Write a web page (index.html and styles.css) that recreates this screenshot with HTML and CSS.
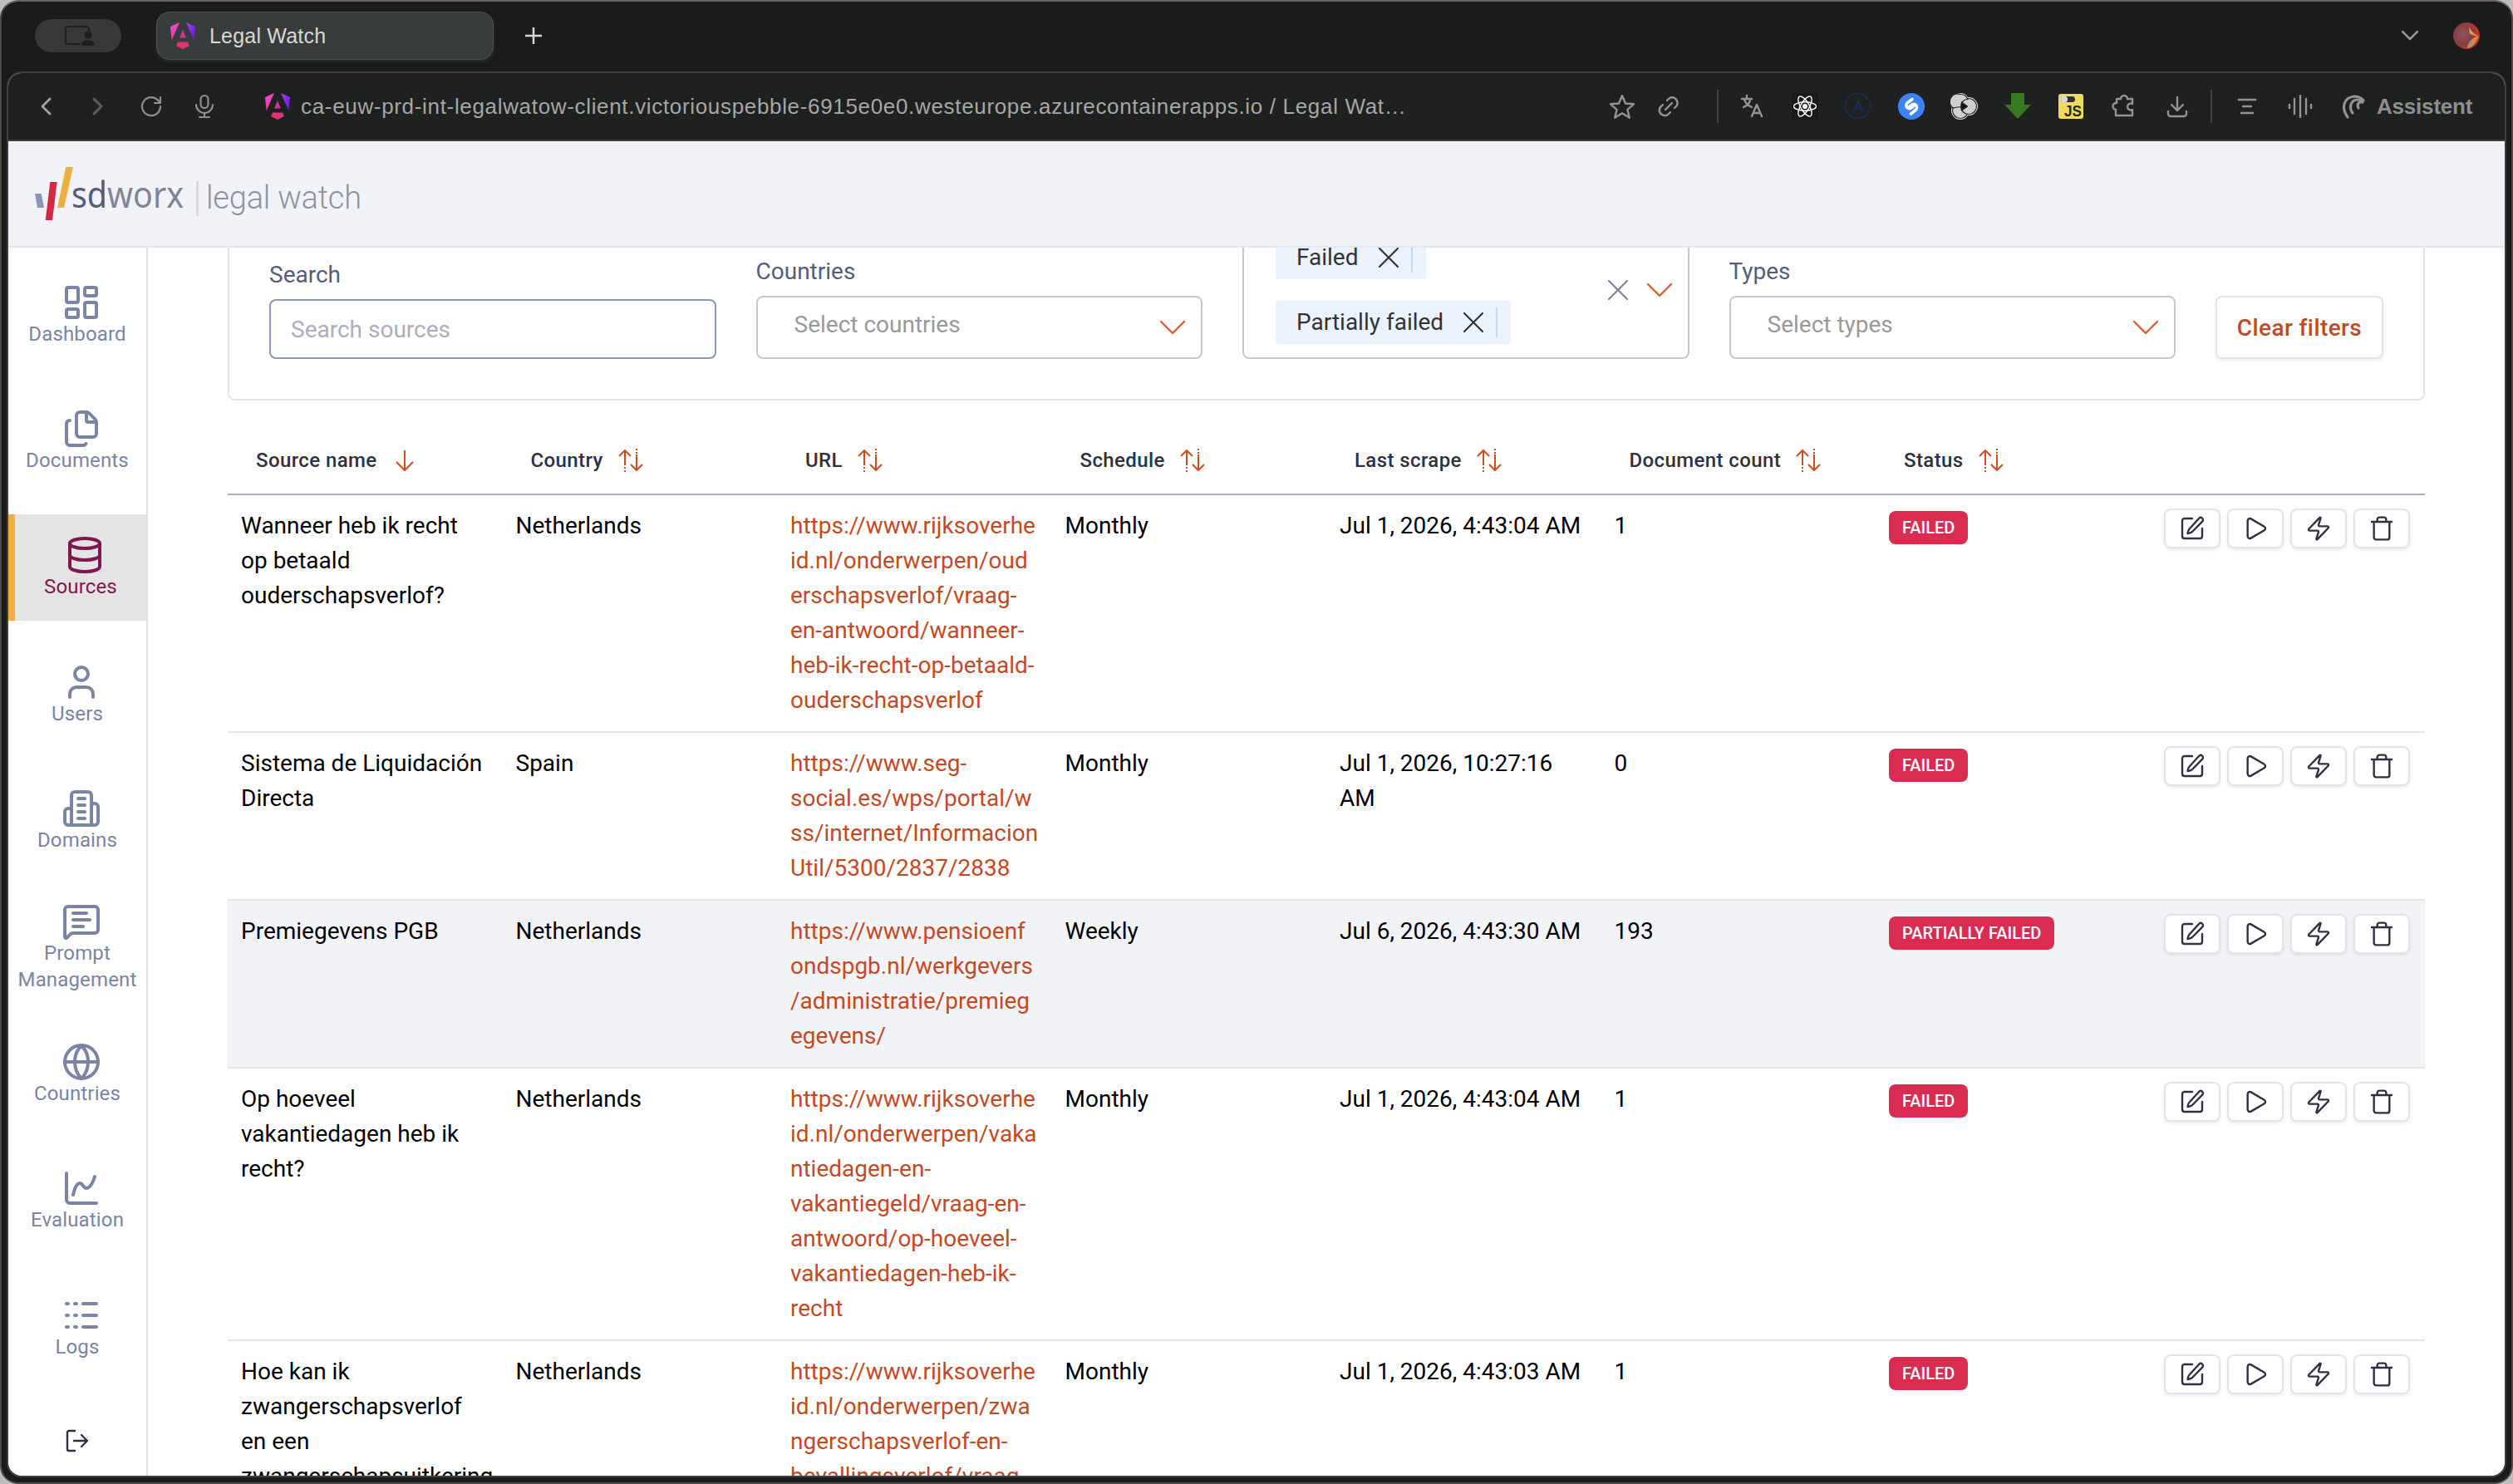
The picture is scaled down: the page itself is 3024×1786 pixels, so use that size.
FILE: index.html
```html
<!DOCTYPE html>
<html lang="en">
<head>
    <meta charset="UTF-8">
    <meta name="viewport" content="width=device-width, initial-scale=1.0">
    <title>Legal Watch</title>
    <link rel="stylesheet" href="styles.css">
</head>
<body>
    <!-- Icon definitions -->
    <svg class="sprite" width="0" height="0">
        <defs>
            <linearGradient id="ng-left" x1="0" y1="0" x2="0.4" y2="1">
                <stop offset="0" stop-color="#f04be0"/>
                <stop offset="1" stop-color="#e83a8c"/>
            </linearGradient>
            <linearGradient id="ng-right" x1="0" y1="0" x2="1" y2="1">
                <stop offset="0" stop-color="#b23df5"/>
                <stop offset="1" stop-color="#5a12e0"/>
            </linearGradient>
            <linearGradient id="ng-mid" x1="0" y1="1" x2="1" y2="0">
                <stop offset="0" stop-color="#ee3650"/>
                <stop offset="1" stop-color="#c330b4"/>
            </linearGradient>
            <radialGradient id="avatar-fill" cx="0.35" cy="0.45" r="0.7">
                <stop offset="0" stop-color="#8d5560"/>
                <stop offset="0.55" stop-color="#8a3b40"/>
                <stop offset="0.85" stop-color="#c8352a"/>
                <stop offset="1" stop-color="#8e2620"/>
            </radialGradient>
        </defs>
        <symbol id="angular" viewBox="0 0 30 32">
            <path fill="url(#ng-left)" d="M11 0 0 5l1.6 16.5z"/>
            <path fill="url(#ng-right)" d="M19 0l11 5-1.600 16.500z"/>
            <path fill="url(#ng-mid)" fill-rule="evenodd" d="M15 9l4 9.500h-8zM9 23.500h12l2 4.500-8 4-8-4z"/>
        </symbol>
        <symbol id="dashboard" viewBox="0 0 24 24"><rect width="7" height="9" x="3" y="3" rx="1"/><rect width="7" height="5" x="14" y="3" rx="1"/><rect width="7" height="9" x="14" y="12" rx="1"/><rect width="7" height="5" x="3" y="16" rx="1"/></symbol>
        <symbol id="files" viewBox="0 0 24 24"><path d="M15 2h-4a2 2 0 0 0-2 2v11a2 2 0 0 0 2 2h8a2 2 0 0 0 2-2V8"/><path d="M16.706 2.706A2.400 2.400 0 0 0 15 2v5a1 1 0 0 0 1 1h5a2.400 2.400 0 0 0-.706-1.706z"/><path d="M5 7a2 2 0 0 0-2 2v11a2 2 0 0 0 2 2h8a2 2 0 0 0 1.732-1"/></symbol>
        <symbol id="database" viewBox="0 0 24 24"><ellipse cx="12" cy="5" rx="9" ry="3"/><path d="M3 5v14a9 3 0 0 0 18 0V5M3 12a9 3 0 0 0 18 0"/></symbol>
        <symbol id="user" viewBox="0 0 24 24"><path d="M19 21v-2a4 4 0 0 0-4-4H9a4 4 0 0 0-4 4v2"/><circle cx="12" cy="7" r="4"/></symbol>
        <symbol id="building" viewBox="0 0 24 24"><path d="M6 22V4a2 2 0 0 1 2-2h8a2 2 0 0 1 2 2v18z"/><path d="M6 12H4a2 2 0 0 0-2 2v6a2 2 0 0 0 2 2h2M18 9h2a2 2 0 0 1 2 2v9a2 2 0 0 1-2 2h-2M10 6h4M10 10h4M10 14h4M10 18h4"/></symbol>
        <symbol id="message" viewBox="0 0 24 24"><path d="M22 17a2 2 0 0 1-2 2H6.828a2 2 0 0 0-1.414.586l-2.202 2.202A.71.71 0 0 1 2 21.286V5a2 2 0 0 1 2-2h16a2 2 0 0 1 2 2z"/><path d="M7 7h8M7 11h10M7 15h6"/></symbol>
        <symbol id="globe" viewBox="0 0 24 24"><circle cx="12" cy="12" r="10"/><path d="M12 2a14.500 14.500 0 0 0 0 20 14.500 14.500 0 0 0 0-20M2 12h20"/></symbol>
        <symbol id="chart" viewBox="0 0 24 24"><path d="M3 3v16a2 2 0 0 0 2 2h16"/><path d="M7 16c.5-2 1.500-7 4-7 2 0 2 3 4 3 2.500 0 4.500-5 5-7"/></symbol>
        <symbol id="logs" viewBox="0 0 24 24"><path d="M3 5h1M3 12h1M3 19h1M8 5h1M8 12h1M8 19h1M13 5h8M13 12h8M13 19h8"/></symbol>
        <symbol id="edit" viewBox="0 0 24 24"><path d="M12 3H5a2 2 0 0 0-2 2v14a2 2 0 0 0 2 2h14a2 2 0 0 0 2-2v-7"/><path d="M18.200 2.800a2 2 0 0 1 2.900 2.900l-8.700 8.900a6 6 0 0 1-2.600 1.500l-1.900.4.400-1.900a6 6 0 0 1 1.500-2.600z"/></symbol>
        <symbol id="play" viewBox="0 0 24 24"><path d="M5 5a2 2 0 0 1 3.008-1.728l11.997 6.998a2 2 0 0 1 .003 3.458l-12 7A2 2 0 0 1 5 19z"/></symbol>
        <symbol id="zap" viewBox="0 0 24 24"><path d="M4 14a1 1 0 0 1-.78-1.630l9.900-10.200a.5.5 0 0 1 .86.460l-1.920 6.020A1 1 0 0 0 13 10h7a1 1 0 0 1 .78 1.630l-9.900 10.200a.5.5 0 0 1-.86-.460l1.920-6.020A1 1 0 0 0 11 14z"/></symbol>
        <symbol id="trash" viewBox="0 0 24 24"><path d="M3 6h18M19 6v14a2 2 0 0 1-2 2H7a2 2 0 0 1-2-2V6M8 6V4a2 2 0 0 1 2-2h4a2 2 0 0 1 2 2v2"/></symbol>
        <symbol id="sort" viewBox="0 0 32 32"><path d="M9 22V4M2 11l7-7 7 7M23 9v18M16 21l7 7 7-7"/><path d="M9 24v6M23 2v6" stroke-dasharray="2 2"/></symbol>
        <symbol id="sort-down" viewBox="0 0 32 32"><path d="M16 4v24M6 18l10 10 10-10"/></symbol>
        <symbol id="chevron" viewBox="0 0 32 32"><path d="M2 9l14 14L30 9"/></symbol>
        <symbol id="close" viewBox="0 0 24 24"><path d="M1 1l22 22M23 1L1 23"/></symbol>
    </svg>

    <div class="window">
        <div class="tab-strip">
            <div class="profile-pill">
                <svg width="38" height="26" viewBox="0 0 38 26">
                    <path d="M19 23H5a3 3 0 0 1-3-3V5a3 3 0 0 1 3-3h22a3 3 0 0 1 3 3v2" fill="none" stroke="#1e2020" stroke-width="2"/>
                    <circle cx="29" cy="12" r="4.500" fill="#1e2020"/>
                    <path d="M21 25c0-4 3-7 8-7s8 3 8 7z" fill="#1e2020"/>
                </svg>
            </div>
            <div class="tab">
                <svg class="favicon"><use href="#angular"/></svg>
                <span class="tab-title">Legal Watch</span>
            </div>
            <svg class="new-tab" viewBox="0 0 20 20"><path d="M10 0v20M0 10h20"/></svg>
            <svg class="tab-list" viewBox="0 0 20 12"><path d="M1 1l9 9 9-9"/></svg>
            <svg class="avatar" viewBox="0 0 32 32">
                <circle cx="16" cy="16" r="16" fill="url(#avatar-fill)"/>
                <path d="M18 2c2 6 6 12 13 14-5 1-9-1-12-3 1-4 0-8-1-11z" fill="#d98a4a"/>
                <path d="M20 7c1 4 3 6 6 7l-5-1z" fill="#9fc0a8"/>
                <path d="M31 16c-8 2-12 6-14 15 6-1 11-7 14-15z" fill="#d98a3c"/>
                <path d="M24 20c-4 2-6 5-7 10 4-2 6-5 7-10z" fill="#7f9a90"/>
            </svg>
        </div>

        <div class="panel">
            <div class="toolbar">
                <div class="nav-buttons">
                    <svg viewBox="0 0 32 32"><path d="M20 7l-9 9 9 9"/></svg>
                    <svg class="dim" viewBox="0 0 32 32"><path d="M9 7l9 9-9 9"/></svg>
                    <svg class="thin" viewBox="0 0 32 32"><path d="M25 16a11 11 0 1 1-3-7.500l3 3M25 5v7h-7"/></svg>
                    <svg class="thin" viewBox="0 0 32 32"><rect x="9.500" y="3" width="9" height="15" rx="4.500"/><path d="M4 14a10 10 0 0 0 20 0M14 24v4M8 29h12"/></svg>
                </div>
                <div class="address">
                    <svg class="favicon"><use href="#angular"/></svg>
                    <span class="url">ca-euw-prd-int-legalwatow-client.victoriouspebble-6915e0e0.westeurope.azurecontainerapps.io / Legal Wat…</span>
                </div>
                <div class="tools">
                    <svg viewBox="0 0 32 32"><path d="M16 3l4 9.500 10 .8-7.600 6.600 2.400 9.800-8.800-5.400-8.800 5.400 2.400-9.800L2 13.300l10-.8z"/></svg>
                    <svg class="link-icon" viewBox="0 0 32 32"><path d="M12 20l8-8M14 9l2-2a6 6 0 0 1 10 2.500A6 6 0 0 1 25 16l-2 2M9 14l-2 2a6 6 0 0 0 1 10 6 6 0 0 0 8-1l2-2"/></svg>
                    <span class="tool-divider first"></span>
                    <svg viewBox="0 0 32 32"><path d="M4 7h12M10 3v4M6 17c5-2 8-5 8-10M7 7c1 5 4 8 9 10M16 28l6-14 6 14M18 24h8"/></svg>
                    <svg class="react" viewBox="0 0 32 32"><ellipse cx="16" cy="16" rx="13.500" ry="5.200"/><ellipse cx="16" cy="16" rx="13.500" ry="5.200" transform="rotate(60 16 16)"/><ellipse cx="16" cy="16" rx="13.500" ry="5.200" transform="rotate(120 16 16)"/><circle cx="16" cy="16" r="2.300" fill="#fff"/></svg>
                    <svg class="apollo" viewBox="0 0 32 32"><path d="M25 4A15 15 0 1 0 30 12"/><circle cx="27" cy="6" r="1.500" fill="#172c4e"/><path d="M11 22l5-13 5 13M13 18h6" stroke-width="3"/></svg>
                    <svg class="shazam" viewBox="0 0 32 32"><circle cx="16" cy="16" r="16" fill="#3b82f6" stroke="none"/><path d="M17 7.500l-5.500 4a4 4 0 0 0-.5 6 4 4 0 0 0 5.500 0l2-1.500M15.500 25l5.500-4.500a4 4 0 0 0 .5-6 4 4 0 0 0-5.500 0l-2 1.500"/></svg>
                    <svg class="rings" viewBox="0 0 32 32"><circle class="halo" cx="11" cy="11" r="10"/><circle class="halo" cx="11" cy="21" r="10"/><circle class="halo" cx="21" cy="16" r="10"/><circle cx="11" cy="21" r="9.500"/><circle cx="21" cy="16" r="9.500"/><path d="M11 1.500a9.500 9.500 0 0 1 9 6c-5 0-9 4-8 9.500-4-1-8 1-10 1A9.500 9.500 0 0 1 11 1.500z"/><path d="M12.500 11l7 5-7 5z" fill="#111"/></svg>
                    <svg class="plain" viewBox="0 0 32 32"><path d="M8 0h16v14h8L16 31 0 14h8z" fill="#36791f"/></svg>
                    <svg class="plain" viewBox="0 0 32 32"><rect x="1" y="1" width="30" height="30" rx="3" fill="#f0db5d"/><rect x="4" y="4" width="17" height="7" rx="3.500" fill="#333"/><circle cx="8" cy="7.500" r="4" fill="#d8d8d8"/><text class="js" x="8" y="28" textLength="21" lengthAdjust="spacingAndGlyphs">JS</text></svg>
                    <svg viewBox="0 0 32 32"><path d="M7 7h5a4 4 0 1 1 8 0h6v6a4 4 0 1 0 0 7v7H6v-7a4 4 0 1 1 1-8z"/></svg>
                    <svg viewBox="0 0 32 32"><path d="M16 5v16M9 14l7 7 7-7M5 22v3a3 3 0 0 0 3 3h16a3 3 0 0 0 3-3v-3"/></svg>
                    <span class="tool-divider second"></span>
                    <svg viewBox="0 0 32 32"><path d="M6 8h20M11 16h10M9 24h14"/></svg>
                    <svg viewBox="0 0 32 32"><path d="M3 14v4M9 7v18M16 3v26M23 7v18M29 14v4"/></svg>
                    <svg class="assist-icon" viewBox="0 0 32 32"><path d="M9 29C1 18 4 5 17 4c6 0 9 2 11 5"/><path d="M15 24c-5-7-2-16 6-16 3 0 5 1 6 3M22 18c-2-4 0-8 4-7"/></svg>
                    <span class="assistant">Assistent</span>
                </div>
            </div>

            <header class="app-header">
                <svg class="brand" width="420" height="74" viewBox="0 0 420 74">
                    <polygon points="2,37 9.700,37 13,54 5,54" fill="#8a96b6"/>
                    <polygon points="20.300,23 28.700,23 23,69 14.700,69" fill="#d22b41"/>
                    <polygon points="39.300,5 48,5 37,54 29,54" fill="#edb03d"/>
                    <text class="brand-name" x="46" y="54" textLength="135" lengthAdjust="spacingAndGlyphs"><tspan fill="#555c75">sd</tspan><tspan fill="#7f8597">worx</tspan></text>
                    <rect x="196" y="22" width="3" height="42" fill="#d9dad9"/>
                    <text class="brand-product" x="208" y="55" textLength="187">legal watch</text>
                </svg>
            </header>

            <div class="app-body">
                <nav class="sidebar">
                    <a class="nav-item"><svg><use href="#dashboard"/></svg>Dashboard</a>
                    <a class="nav-item"><svg><use href="#files"/></svg>Documents</a>
                    <a class="nav-item active"><svg><use href="#database"/></svg>Sources</a>
                    <a class="nav-item"><svg><use href="#user"/></svg>Users</a>
                    <a class="nav-item"><svg><use href="#building"/></svg>Domains</a>
                    <a class="nav-item"><svg><use href="#message"/></svg>Prompt Management</a>
                    <a class="nav-item"><svg><use href="#globe"/></svg>Countries</a>
                    <a class="nav-item"><svg><use href="#chart"/></svg>Evaluation</a>
                    <a class="nav-item"><svg><use href="#logs"/></svg>Logs</a>
                    <a class="logout">
                        <svg viewBox="0 0 28 28"><path d="M11 2H4a2 2 0 0 0-2 2v20a2 2 0 0 0 2 2h7M10 14h16M19 7l7 7-7 7"/></svg>
                    </a>
                </nav>

                <main class="content">
                    <section class="filters">
                        <div class="field">
                            <label>Search</label>
                            <div class="search-input">Search sources</div>
                        </div>
                        <div class="field">
                            <label>Countries</label>
                            <div class="select"><span>Select countries</span><svg class="chevron"><use href="#chevron"/></svg></div>
                        </div>
                        <div class="field">
                            <div class="multi-select">
                                <div class="chips">
                                    <span class="chip">Failed<svg><use href="#close"/></svg></span>
                                    <span class="chip">Partially failed<svg><use href="#close"/></svg></span>
                                </div>
                                <svg class="clear"><use href="#close"/></svg>
                                <svg class="chevron"><use href="#chevron"/></svg>
                            </div>
                        </div>
                        <div class="field">
                            <label>Types</label>
                            <div class="select"><span>Select types</span><svg class="chevron"><use href="#chevron"/></svg></div>
                        </div>
                        <button class="clear-filters">Clear filters</button>
                    </section>

                    <table class="sources">
                        <thead>
                            <tr>
                                <th><span>Source name<svg><use href="#sort-down"/></svg></span></th>
                                <th><span>Country<svg><use href="#sort"/></svg></span></th>
                                <th><span>URL<svg><use href="#sort"/></svg></span></th>
                                <th><span>Schedule<svg><use href="#sort"/></svg></span></th>
                                <th><span>Last scrape<svg><use href="#sort"/></svg></span></th>
                                <th><span>Document count<svg><use href="#sort"/></svg></span></th>
                                <th><span>Status<svg><use href="#sort"/></svg></span></th>
                                <th></th>
                            </tr>
                        </thead>
                        <tbody>
                            <tr>
                                <td>Wanneer heb ik recht<br>op betaald<br>ouderschapsverlof?</td>
                                <td>Netherlands</td>
                                <td><a>https://www.rijksoverhe<br>id.nl/onderwerpen/oud<br>erschapsverlof/vraag-<br>en-antwoord/wanneer-<br>heb-ik-recht-op-betaald-<br>ouderschapsverlof</a></td>
                                <td>Monthly</td>
                                <td>Jul 1, 2026, 4:43:04 AM</td>
                                <td>1</td>
                                <td><span class="badge">FAILED</span></td>
                                <td><div class="actions"><button><svg><use href="#edit"/></svg></button><button><svg><use href="#play"/></svg></button><button><svg><use href="#zap"/></svg></button><button><svg><use href="#trash"/></svg></button></div></td>
                            </tr>
                            <tr>
                                <td>Sistema de Liquidación<br>Directa</td>
                                <td>Spain</td>
                                <td><a>https://www.seg-<br>social.es/wps/portal/w<br>ss/internet/Informacion<br>Util/5300/2837/2838</a></td>
                                <td>Monthly</td>
                                <td>Jul 1, 2026, 10:27:16<br>AM</td>
                                <td>0</td>
                                <td><span class="badge">FAILED</span></td>
                                <td><div class="actions"><button><svg><use href="#edit"/></svg></button><button><svg><use href="#play"/></svg></button><button><svg><use href="#zap"/></svg></button><button><svg><use href="#trash"/></svg></button></div></td>
                            </tr>
                            <tr class="hovered">
                                <td>Premiegevens PGB</td>
                                <td>Netherlands</td>
                                <td><a>https://www.pensioenf<br>ondspgb.nl/werkgevers<br>/administratie/premieg<br>egevens/</a></td>
                                <td>Weekly</td>
                                <td>Jul 6, 2026, 4:43:30 AM</td>
                                <td>193</td>
                                <td><span class="badge">PARTIALLY FAILED</span></td>
                                <td><div class="actions"><button><svg><use href="#edit"/></svg></button><button><svg><use href="#play"/></svg></button><button><svg><use href="#zap"/></svg></button><button><svg><use href="#trash"/></svg></button></div></td>
                            </tr>
                            <tr>
                                <td>Op hoeveel<br>vakantiedagen heb ik<br>recht?</td>
                                <td>Netherlands</td>
                                <td><a>https://www.rijksoverhe<br>id.nl/onderwerpen/vaka<br>ntiedagen-en-<br>vakantiegeld/vraag-en-<br>antwoord/op-hoeveel-<br>vakantiedagen-heb-ik-<br>recht</a></td>
                                <td>Monthly</td>
                                <td>Jul 1, 2026, 4:43:04 AM</td>
                                <td>1</td>
                                <td><span class="badge">FAILED</span></td>
                                <td><div class="actions"><button><svg><use href="#edit"/></svg></button><button><svg><use href="#play"/></svg></button><button><svg><use href="#zap"/></svg></button><button><svg><use href="#trash"/></svg></button></div></td>
                            </tr>
                            <tr>
                                <td>Hoe kan ik<br>zwangerschapsverlof<br>en een<br>zwangerschapsuitkering</td>
                                <td>Netherlands</td>
                                <td><a>https://www.rijksoverhe<br>id.nl/onderwerpen/zwa<br>ngerschapsverlof-en-<br>bevallingsverlof/vraag-</a></td>
                                <td>Monthly</td>
                                <td>Jul 1, 2026, 4:43:03 AM</td>
                                <td>1</td>
                                <td><span class="badge">FAILED</span></td>
                                <td><div class="actions"><button><svg><use href="#edit"/></svg></button><button><svg><use href="#play"/></svg></button><button><svg><use href="#zap"/></svg></button><button><svg><use href="#trash"/></svg></button></div></td>
                            </tr>
                        </tbody>
                    </table>
                </main>
            </div>
        </div>
    </div>
</body>
</html>
```
FILE: styles.css
```css
* {
    box-sizing: border-box;
}

body {
    margin: 0;
    background: #bdbdbd;
    font-family: Roboto, sans-serif;
    font-size: 28px;
}

svg {
    display: block;
    flex-shrink: 0;
    fill: none;
    stroke-linecap: round;
    stroke-linejoin: round;
}

.sprite {
    position: absolute;
}

/* Browser window */
.window {
    display: flex;
    flex-direction: column;
    width: 3024px;
    height: 1786px;
    padding: 0 6px 6px;
    background: #1a1c1b;
    border: 2px solid #4a4c4b;
    border-top-color: #636565;
    border-radius: 22px;
    overflow: hidden;
}

.tab-strip {
    display: flex;
    align-items: center;
    height: 84px;
    padding: 0 32px 2px 34px;
    flex-shrink: 0;
}

.profile-pill {
    display: flex;
    align-items: center;
    justify-content: center;
    width: 104px;
    height: 40px;
    padding-left: 4px;
    border-radius: 20px;
    background: #373938;
}

.tab {
    display: flex;
    align-items: center;
    width: 406px;
    height: 58px;
    margin-left: 42px;
    padding-left: 16px;
    border: 1px solid #505251;
    border-radius: 16px;
    background: #393c3d;
    box-shadow: 0 2px 4px #2e3030;
}

.favicon {
    width: 30px;
    height: 32px;
}

.tab-title {
    margin-left: 17px;
    color: #d8d8d6;
    font-family: "Liberation Sans", sans-serif;
    font-size: 25px;
    letter-spacing: 0.2px;
}

.new-tab {
    width: 20px;
    height: 20px;
    margin-left: 38px;
    stroke: #d8d8d8;
    stroke-width: 2.5;
}

.tab-list {
    width: 20px;
    height: 12px;
    margin-left: auto;
    stroke: #949695;
    stroke-width: 2.5;
}

.avatar {
    width: 32px;
    height: 32px;
    margin-left: 42px;
}

.panel {
    display: flex;
    flex-direction: column;
    flex: 1;
    min-height: 0;
    border: 2px solid #3f4140;
    border-radius: 18px;
    background: #fff;
    overflow: hidden;
}

.toolbar {
    display: flex;
    align-items: center;
    height: 82px;
    flex-shrink: 0;
    padding: 0 38px 0 30px;
    border-bottom: 2px solid #3f4041;
    background: #1f2120;
    color: #a5a7a6;
    font-family: "Liberation Sans", sans-serif;
    font-size: 26px;
}

.nav-buttons {
    display: flex;
    gap: 32px;
}

.nav-buttons svg {
    width: 32px;
    height: 32px;
    stroke: #a3a5a4;
    stroke-width: 2.8;
}

.nav-buttons .dim {
    stroke: #5f6160;
}

.nav-buttons .thin {
    stroke: #8d8f8e;
    stroke-width: 2.2;
}

.address {
    display: flex;
    align-items: center;
    flex: 1;
    min-width: 0;
    margin-left: 55px;
}

.url {
    margin-left: 13px;
    letter-spacing: 0.67px;
    white-space: nowrap;
}

.tools {
    display: flex;
    align-items: center;
    gap: 32px;
}

.tools svg {
    width: 32px;
    height: 32px;
    stroke: #929493;
    stroke-width: 2.4;
}

.tools .link-icon {
    margin-left: -8px;
}

.tool-divider {
    width: 2px;
    height: 40px;
    background: #434544;
}

.tool-divider.first {
    margin: 0 -8px 0 10px;
}

.tool-divider.second {
    margin: 0 -6px 0 -8px;
}

.tools .react {
    stroke: #fff;
    stroke-width: 1.4;
    background: #1a1a1a;
}

.tools .apollo {
    stroke: #172c4e;
    stroke-width: 1.6;
}

.tools .shazam {
    stroke: #fff;
    stroke-width: 3.6;
}

.tools .rings {
    fill: #cfcfcf;
    stroke: #222;
    stroke-width: 1.2;
    overflow: visible;
}

.rings .halo {
    stroke: #e4e4e4;
    stroke-width: 2;
}

.tools .plain {
    stroke: none;
}

.js {
    fill: #2a2a22;
    font-size: 19px;
    font-weight: bold;
}

.tools .assist-icon {
    stroke-width: 3.2;
}

.assistant {
    width: 116px;
    margin-left: -20px;
    color: #8d8f8e;
    font-weight: bold;
    letter-spacing: -0.2px;
}

/* Application */
.app-header {
    display: flex;
    align-items: center;
    height: 128px;
    flex-shrink: 0;
    padding: 0 30px;
    border-bottom: 2px solid #e3e6ec;
    background: #f2f3f8;
}

.brand-name {
    font-family: "Noto Sans", sans-serif;
    font-size: 43px;
}

.brand-product {
    fill: #8d92a1;
    font-size: 38px;
    font-weight: 300;
}

.app-body {
    display: flex;
    flex: 1;
    min-height: 0;
}

.sidebar {
    display: flex;
    flex-direction: column;
    gap: 24.4px;
    width: 168px;
    flex-shrink: 0;
    padding-top: 16px;
    border-right: 2px solid #e4e4e4;
}

.nav-item {
    display: flex;
    flex-direction: column;
    align-items: center;
    justify-content: center;
    height: 128px;
    flex-shrink: 0;
    padding-top: 1px;
    color: #7a84a5;
    font-size: 24px;
    line-height: 32px;
    letter-spacing: 0.15px;
    text-align: center;
}

.nav-item svg {
    width: 48px;
    height: 48px;
    margin: 0 0 -2px 10px;
    stroke: currentColor;
    stroke-width: 2;
}

.nav-item.active {
    border-left: 8px solid #efb03e;
    background: #e4e4e4;
    color: #801650;
}

.logout {
    display: flex;
    justify-content: center;
    margin-top: 34px;
}

.logout svg {
    width: 28px;
    height: 28px;
    stroke: #2d3142;
    stroke-width: 2.4;
}

.content {
    flex: 1;
    min-width: 0;
    padding: 0 96px;
    overflow: hidden;
}

.filters {
    display: flex;
    align-items: flex-end;
    gap: 48px;
    height: 184px;
    padding: 0 48px 48px;
    border: 2px solid #e1e4ec;
    border-top: none;
    border-radius: 0 0 8px 8px;
}

.field {
    flex: 1;
    min-width: 0;
}

.field label {
    display: block;
    margin-bottom: 9px;
    color: #555d78;
    line-height: 40px;
}

.search-input {
    height: 72px;
    padding-left: 24px;
    border: 2px solid #8b97b6;
    border-radius: 8px;
    color: #abaebb;
    line-height: 69px;
}

.select {
    display: flex;
    justify-content: space-between;
    height: 76px;
    padding: 0 18px 0 44px;
    border: 2px solid #c8c8c8;
    border-radius: 8px;
    color: #999;
    line-height: 65px;
}

.chevron {
    width: 32px;
    height: 32px;
    stroke: #df5a29;
    stroke-width: 2.4;
}

.select .chevron {
    margin-top: 20px;
}

.multi-select {
    display: flex;
    align-items: center;
    height: 166px;
    padding: 0 18px 0 38px;
    border: 2px solid #c8c8c8;
    border-radius: 8px;
}

.chips {
    display: flex;
    flex: 1;
    flex-direction: column;
    align-items: flex-start;
    gap: 26px;
}

.chip {
    display: flex;
    align-items: center;
    height: 52px;
    padding: 0 16px 0 25px;
    border-radius: 4px;
    background: #ebf3fe;
    color: #333;
    line-height: 50px;
}

.chip svg {
    box-sizing: content-box;
    width: 24px;
    height: 24px;
    margin-left: 24px;
    padding: 6px 15px 6px 0;
    border-right: 2px solid #c2dbf8;
    stroke: #333;
    stroke-width: 2.2;
}

.clear {
    width: 24px;
    height: 24px;
    margin-right: 22px;
    stroke: #7f8597;
    stroke-width: 2.2;
}

button {
    border: 2px solid #e1e4ec;
    border-radius: 8px;
    background: #fff;
    box-shadow: 0 2px 4px rgba(0, 0, 0, 0.08);
    font-family: inherit;
}

.clear-filters {
    width: 202px;
    height: 76px;
    padding: 0;
    color: #c7481f;
    font-size: 28px;
    font-weight: 500;
    letter-spacing: 0.4px;
}

/* Sources table */
.sources {
    width: 100%;
    margin-top: 32px;
    border-spacing: 0;
    table-layout: fixed;
}

.sources th {
    height: 82px;
    padding: 0 0 0 34px;
    border-bottom: 2px solid #abb0c4;
    color: #2d3142;
    font-size: 24px;
    font-weight: 500;
    letter-spacing: 0.4px;
    text-align: left;
}

.sources th span {
    display: flex;
    align-items: center;
}

.sources th svg {
    width: 32px;
    height: 32px;
    margin-left: 17px;
    stroke: #cf4c1f;
    stroke-width: 2;
    stroke-linecap: butt;
}

.sources td {
    padding: 16px;
    border-bottom: 2px solid #e1e4ea;
    color: #000;
    line-height: 42px;
    vertical-align: top;
    white-space: nowrap;
}

.sources td:last-child {
    padding-right: 18px;
}

.sources a {
    color: #c7481f;
}

.hovered {
    background: #f2f3f7;
}

.badge {
    display: block;
    width: max-content;
    height: 40px;
    margin-top: 3px;
    padding: 0 16px;
    border-radius: 8px;
    background: #d92c50;
    color: #fff;
    font-size: 20px;
    font-weight: 500;
    line-height: 40px;
}

.actions {
    display: flex;
    justify-content: flex-end;
    gap: 8px;
}

.actions button {
    display: flex;
    align-items: center;
    justify-content: center;
    width: 68px;
    height: 48px;
    padding: 0;
}

.actions svg {
    width: 32px;
    height: 32px;
    stroke: #2d3142;
    stroke-width: 1.8;
}
```
